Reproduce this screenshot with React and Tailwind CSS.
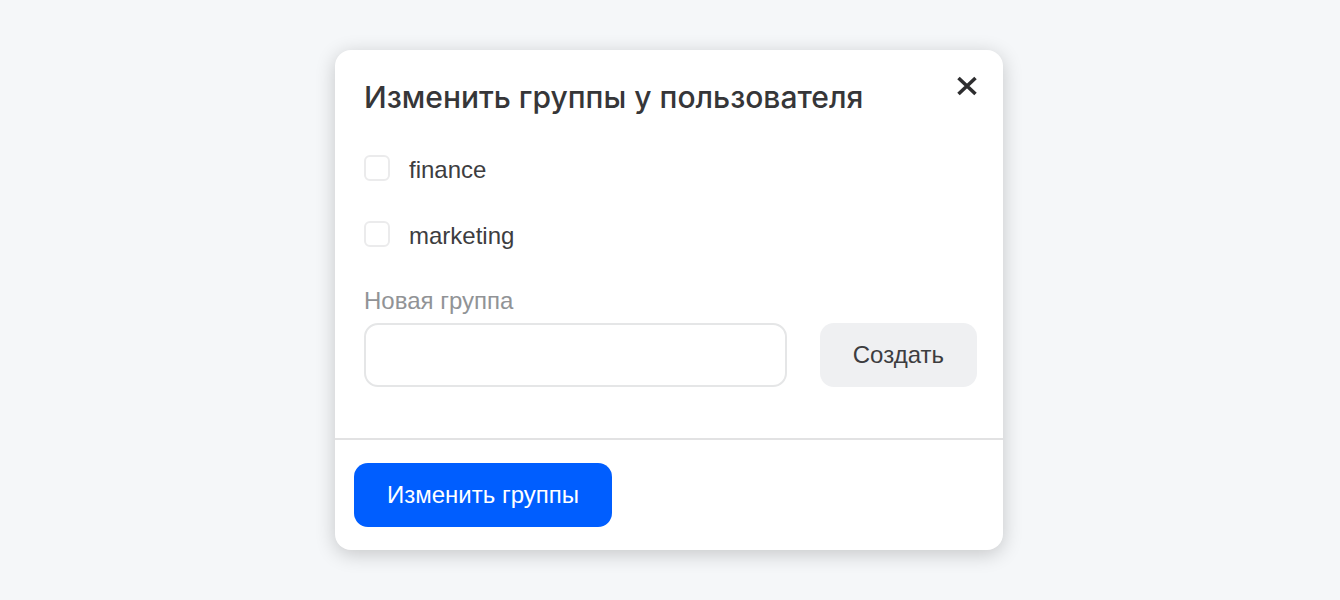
import { useState } from 'react'

const GROUPS = ['finance', 'marketing']

function CloseIcon() {
  return (
    <svg width="20" height="20" viewBox="0 0 20 20" fill="none" stroke="currentColor" strokeWidth="3.6" aria-hidden="true">
      <path d="M1.5 2 L18.5 18 M18.5 2 L1.5 18" />
    </svg>
  )
}

function GroupRow({ name, checked, onChange }) {
  return (
    <label className="flex items-center gap-[19px]">
      <input
        type="checkbox"
        checked={checked}
        onChange={onChange}
        className="size-[26px] shrink-0 appearance-none rounded-md border-2 border-[#ebebec] bg-white checked:border-[#005eff] checked:bg-[#005eff]"
      />
      <span className="pt-1 leading-7">{name}</span>
    </label>
  )
}

export default function App() {
  const [selected, setSelected] = useState({})
  const [newGroup, setNewGroup] = useState('')

  const toggle = name => setSelected(prev => ({ ...prev, [name]: !prev[name] }))

  return (
    <div className="flex min-h-screen items-center justify-center bg-[#f5f7f9] py-[50px] pr-0.5 font-['Liberation_Sans',Arial,sans-serif] text-2xl text-[#3d3d3f]">
      <form
        role="dialog"
        aria-labelledby="dialog-title"
        onSubmit={e => e.preventDefault()}
        className="w-full max-w-[668px] rounded-2xl bg-white shadow-[0_4px_20px_rgba(0,0,0,0.2)]"
      >
        {/* Header */}
        <header className="flex items-start justify-between pt-[26px] pr-[26px] pl-[29px]">
          <h1 id="dialog-title" className="font-['Inter','Noto_Sans',sans-serif] text-[30px] leading-[43px] font-medium text-[#363638]">
            Изменить группы у пользователя
          </h1>
          <button type="button" aria-label="Закрыть" className="text-[#2d2d2f]">
            <CloseIcon />
          </button>
        </header>

        {/* Groups */}
        <div className="flex flex-col gap-[34px] pt-[33px] pl-[29px]">
          {GROUPS.map(name => (
            <GroupRow key={name} name={name} checked={!!selected[name]} onChange={() => toggle(name)} />
          ))}
        </div>

        {/* New group */}
        <div className="pt-[37px] pr-[26px] pb-[51px] pl-[29px]">
          <label htmlFor="new-group" className="block pb-2 leading-7 text-[#919396]">
            Новая группа
          </label>
          <div className="flex gap-[33px]">
            <input
              id="new-group"
              type="text"
              value={newGroup}
              onChange={e => setNewGroup(e.target.value)}
              className="h-16 min-w-0 flex-1 rounded-[14px] border-2 border-[#e5e6e7] bg-white px-4 outline-none"
            />
            <button type="button" className="h-16 rounded-[14px] bg-[#eff0f2] px-[33px]">
              Создать
            </button>
          </div>
        </div>

        {/* Footer */}
        <footer className="border-t-2 border-[#e2e2e3] px-[19px] pt-[23px] pb-[23px]">
          <button type="submit" className="h-16 rounded-[14px] bg-[#005eff] px-[33px] text-white">
            Изменить группы
          </button>
        </footer>
      </form>
    </div>
  )
}
